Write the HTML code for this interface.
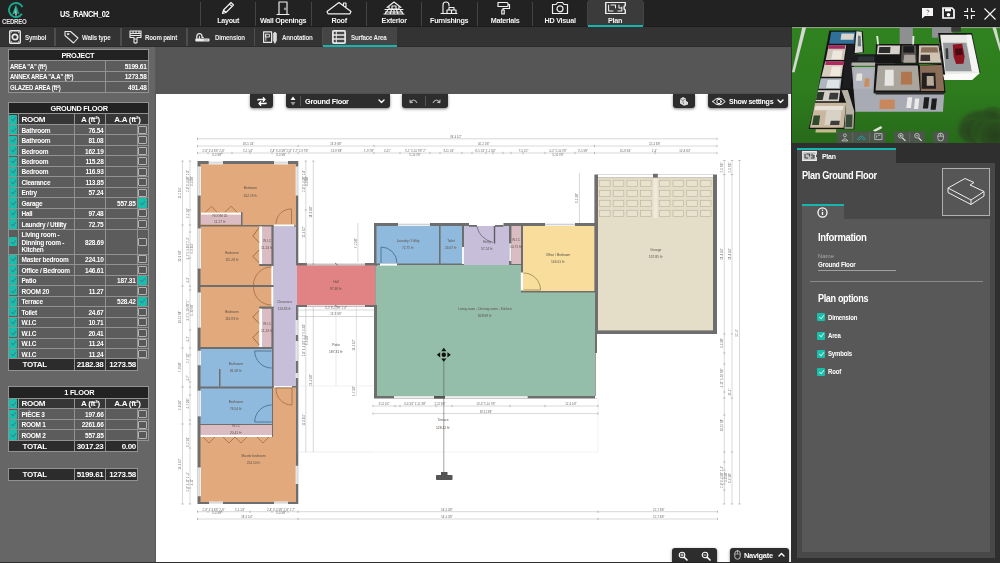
<!DOCTYPE html><html><head><meta charset="utf-8"><title>Cedreo</title><style>*{box-sizing:border-box;margin:0;padding:0}
html,body{width:1000px;height:563px;overflow:hidden;background:#333;font-family:"Liberation Sans",sans-serif;color:#fff}
.abs{position:absolute}
#topbar{position:absolute;left:0;top:0;width:1000px;height:27px;background:#222;border-bottom:1px solid #1c1c1c}
#toolbar{position:absolute;left:0;top:27px;width:1000px;height:20px;background:#333;border-bottom:1.2px solid #2b2b2b}
.tab{position:absolute;top:0;height:27px;text-align:center;font-weight:bold;font-size:8px;letter-spacing:-0.3px;color:#f4f4f4}
.tab span{position:absolute;left:-10px;right:-10px;top:16.3px;line-height:10px;white-space:nowrap;transform:scaleX(.9);letter-spacing:-0.3px}
.tab svg{position:absolute;left:50%;top:2px;margin-left:-8px}
.tsep{position:absolute;top:2px;width:1px;height:24px;background:#444}
.tool{position:absolute;top:0.6px;transform:scaleX(.95);transform-origin:0 50%;height:20px;font-weight:bold;font-size:6.5px;letter-spacing:-0.2px;color:#eee;line-height:20px;white-space:nowrap}
.tool2sep{position:absolute;top:1px;width:1.5px;height:18px;background:#4e4e4e}
#left{position:absolute;left:0;top:47px;width:156px;height:514.5px;background:#666;border-right:1px solid #585858}
#leftbot{position:absolute;left:0;top:561.5px;width:156px;height:2px;background:#2e2e2e}
table.t{position:absolute;border-collapse:collapse;border:1px solid #bdbdbd;font-weight:bold;font-size:6.5px;letter-spacing:-0.25px;color:#fff;table-layout:fixed}
table.t td{border:1px solid #929292;height:10.47px;line-height:9px;padding:0 1px 0 3px;white-space:nowrap;overflow:hidden;background:#5c5c5c}
table.t td.h{height:11.8px;background:#222;text-align:center;font-size:8px;letter-spacing:-0.3px}
table.t td.ch{height:10.6px;background:#363636;font-size:8px;letter-spacing:-0.3px}
table.t td.r{text-align:right;padding-left:0;padding-right:1px}
table.t td.c{text-align:center}
table.t td.tt{height:11.6px;background:#2c2c2c;font-size:8px;letter-spacing:-0.3px}
table.t td.nb{border:none;background:transparent}
.cb{display:inline-block;width:8.6px;height:9.2px;background:#18c0ac;border-radius:1px;vertical-align:middle;position:relative}
.cb:after{content:"";position:absolute;left:3px;top:1.4px;width:2.2px;height:4.4px;border:solid #3a7f9a;border-width:0 1px 1px 0;transform:rotate(40deg)}
.cbe{display:inline-block;width:8.6px;height:8px;background:#585858;border:1.2px solid #b4b4b4;border-radius:1px;vertical-align:middle}
#main{position:absolute;left:156px;top:47px;width:635px;height:516px;background:#565656}
#canvas{position:absolute;left:0;top:47px;width:635px;height:467.5px;background:#fff}
.btn{position:absolute;background:#2d2d2d;border-radius:0 0 3px 3px;box-shadow:0 1px 3px rgba(0,0,0,.5);color:#fff;font-weight:bold;font-size:8px;letter-spacing:-0.3px}
.btnb{border-radius:3px 3px 0 0}
#right{position:absolute;left:791px;top:27px;width:209px;height:536px;background:#2f2f2f}
.tab .ic{position:absolute;left:0;right:0;top:0.9px;height:14px;text-align:center;line-height:0}
.tab .ic svg{position:static;margin:0;display:inline-block}
.tab.act{background:#3b3b3b;border-bottom:2px solid #16b5ae}
table.t td.k{padding:0;text-align:center;line-height:0}
table.t tr.ml td{height:25px;white-space:normal;line-height:7.6px}
table.t .sx{display:inline-block;transform:scaleX(.92);transform-origin:0 50%}
.btn .lbl{white-space:nowrap}
table.t.pj td{height:10.55px;padding-left:1px}table.t.pj td.h{height:11px}
table.t td.tl{padding-left:14px}
#toolbar svg{display:block}
.cbs:after{left:2.9px;top:0.8px;width:2.2px;height:4.4px;border-color:#bfeee6}
#app{position:absolute;left:0;top:0;width:1000px;height:563px;overflow:hidden;will-change:transform}
table.t .hx{display:inline-block;transform:scaleX(.92)}
table.t td{padding-top:1.3px;line-height:7.6px}
table.t td.h,table.t td.ch,table.t td.tt{padding-top:0;line-height:9px}table.t td.k{padding-top:0}
table.t td.h{padding-top:.6px}
</style></head><body><div id="app">
<div id="topbar">
<svg class="abs" style="left:6px;top:1px" width="24" height="18" viewBox="0 0 24 18"><circle cx="10" cy="9" r="7" fill="none" stroke="#1aa88c" stroke-width="1.9" stroke-dasharray="37 7" transform="rotate(32 10 9)"/><path d="M10 3.6 L6.2 13.4 L10 12 Z" fill="#25b89a"/><path d="M10 3.6 L13.8 13.4 L10 12 Z" fill="#149078"/><path d="M10 6.5 L9.3 14.5 L10.7 14.5 Z" fill="#e8f4f0"/></svg>
<div class="abs" style="left:2.3px;top:18.3px;font-size:7.6px;font-weight:bold;letter-spacing:-0.3px;color:#e4e4e4;line-height:8px;transform:scaleX(.8);transform-origin:0 50%">CEDREO</div>
<div class="abs" id="pname" style="left:60px;top:9px;font-size:8.5px;font-weight:bold;letter-spacing:-0.45px;color:#fff;line-height:10px;transform:scaleX(.87);transform-origin:0 50%">US_RANCH_02</div>
<div class="tsep" style="left:200.0px"></div>
<div class="tab" style="left:201.0px;width:54.3px"><div class="ic"><svg width="16" height="14" viewBox="0 0 16 14" stroke="#f0f0f0" stroke-width="1.15" fill="none" stroke-linecap="round" stroke-linejoin="round"><path d="M2.5 12.5 L3.5 9 L11 1.5 L13.5 4 L6 11.5 Z M9.5 3 L12 5.5 M3.5 9 L6 11.5"/></svg></div><span>Layout</span></div>
<div class="tsep" style="left:255.3px"></div>
<div class="tab" style="left:256.3px;width:54.3px"><div class="ic"><svg width="16" height="14" viewBox="0 0 16 14" stroke="#f0f0f0" stroke-width="1.15" fill="none" stroke-linecap="round" stroke-linejoin="round"><path d="M4 13.5 L4 1 L12 1 L12 13.5 M2 13.5 L14 13.5 M10 7 L10 8.5"/></svg></div><span>Wall Openings</span></div>
<div class="tsep" style="left:310.7px"></div>
<div class="tab" style="left:311.7px;width:54.3px"><div class="ic"><svg width="28" height="14" viewBox="0 0 28 14" stroke="#f0f0f0" stroke-width="1.15" fill="none" stroke-linecap="round" stroke-linejoin="round"><path d="M2 10.5 L14 1.5 L26 10.5 M18.5 5 L18.5 2 L21 2 L21 7 M3 12.8 L25 12.8 M2 10.5 L3 12.8 M26 10.5 L25 12.8"/></svg></div><span>Roof</span></div>
<div class="tsep" style="left:366.0px"></div>
<div class="tab" style="left:367.0px;width:54.3px"><div class="ic"><svg width="22" height="14" viewBox="0 0 22 14" stroke="#f0f0f0" stroke-width="1.15" fill="none" stroke-linecap="round" stroke-linejoin="round"><path d="M4 6.5 L11 1 L18 6.5 M6 5 L6 8 L16 8 L16 5 M9 8 L9 5 L13 5 L13 8 M2 8.5 L20 8.5 M5 8.5 L2 13 M8.5 8.5 L7 13 M11 8.5 L11 13 M13.5 8.5 L15 13 M17 8.5 L20 13 M1 13 L21 13 M2.5 11 L19.5 11"/></svg></div><span>Exterior</span></div>
<div class="tsep" style="left:421.3px"></div>
<div class="tab" style="left:422.3px;width:54.3px"><div class="ic"><svg width="20" height="14" viewBox="0 0 20 14" stroke="#f0f0f0" stroke-width="1.15" fill="none" stroke-linecap="round" stroke-linejoin="round"><path d="M4 12.5 L4 4 Q4 1 7 1 Q10 1 10 4 L10 5 M2 12.5 L18 12.5 M8 12.5 L8 9 L17 9 L17 12.5 M10 9 L10 6.5 L15 6.5 L15 9 M12.5 9 L12.5 12.5"/></svg></div><span>Furnishings</span></div>
<div class="tsep" style="left:476.6px"></div>
<div class="tab" style="left:477.6px;width:54.3px"><div class="ic"><svg width="16" height="14" viewBox="1.5 0 16 14" stroke="#f0f0f0" stroke-width="1.15" fill="none" stroke-linecap="round" stroke-linejoin="round"><path d="M2.5 1.5 L11.5 1.5 Q12.5 1.5 12.5 2.5 L12.5 4.5 Q12.5 5.5 11.5 5.5 L2.5 5.5 Z M12.5 3.5 L14 3.5 L14 7.5 L7.5 7.5 L7.5 9 M6.3 9 L8.7 9 L8.7 13 L6.3 13 Z" stroke-width="1.2"/></svg></div><span>Materials</span></div>
<div class="tsep" style="left:532.0px"></div>
<div class="tab" style="left:533.0px;width:54.3px"><div class="ic"><svg width="18" height="14" viewBox="0 0 18 14" stroke="#f0f0f0" stroke-width="1.15" fill="none" stroke-linecap="round" stroke-linejoin="round"><path d="M1.5 3.5 L5 3.5 L6.5 1.5 L11.5 1.5 L13 3.5 L16.5 3.5 L16.5 12.5 L1.5 12.5 Z" stroke-width="1.2"/><circle cx="9" cy="7.8" r="3" stroke-width="1.2"/></svg></div><span>HD Visual</span></div>
<div class="tsep" style="left:587.3px"></div>
<div class="tab act" style="left:588.3px;width:54.3px"><div class="ic"><svg width="23" height="14" viewBox="0 0 20 14" preserveAspectRatio="none" stroke="#f0f0f0" stroke-width="1.15" fill="none" stroke-linecap="round" stroke-linejoin="round"><path d="M1.5 1.5 L18.5 1.5 L18.5 4.5 L17.5 5.5 L17.5 8 L18.5 9 L18.5 12.5 L1.5 12.5 Z" stroke-width="1.2"/><path d="M4 4 L4 10 L8 10 M6 4 L10 4 L10 7 M12 10 L15.5 10 L15.5 6 M13 4 L13 7 L15.5 7" stroke-width="0.9"/></svg></div><span>Plan</span></div>
<div class="tsep" style="left:642.6px"></div>
<svg class="abs" style="left:921px;top:7px" width="13" height="12" viewBox="0 0 13 12"><path d="M1 1 H12 V9 H4 L1 11.5 Z" fill="#f6f6f6"/><path d="M5.5 3.2 Q7.8 2.6 7.8 4.2 Q7.8 5 6.6 5.6 M6.5 7.2 v0.4" stroke="#667" stroke-width="0.9" fill="none"/></svg>
<svg class="abs" style="left:942px;top:7px" width="13" height="12" viewBox="0 0 13 12"><path d="M1 1 H10 L12 3 V11 H1 Z" fill="none" stroke="#fff" stroke-width="1.7"/><rect x="3" y="1.5" width="6" height="2.8" fill="#fff"/><circle cx="6.5" cy="7.7" r="1.8" fill="#fff"/></svg>
<svg class="abs" style="left:963px;top:7px" width="13" height="13" viewBox="0 0 13 13" fill="none" stroke="#f2f2f2" stroke-width="1.2"><path d="M1 4.5 H4.5 V1 M8.5 1 V4.5 H12 M12 8.5 H8.5 V12 M4.5 12 V8.5 H1"/></svg>
<svg class="abs" style="left:984px;top:8px" width="12" height="12" viewBox="0 0 12 12" fill="none" stroke="#f2f2f2" stroke-width="1.2"><path d="M0.5 0.5 L11.5 11.5 M11.5 0.5 L0.5 11.5"/></svg>
</div>
<div id="toolbar">
<div class="tool2sep" style="left:54px"></div>
<div class="tool2sep" style="left:120.3px"></div>
<div class="tool2sep" style="left:186.3px"></div>
<div class="tool2sep" style="left:253.7px"></div>
<div class="tool2sep" style="left:321.5px"></div>
<div class="abs" style="left:322.5px;top:0;width:74.5px;height:20px;background:#454545;border-bottom:2px solid #16b5ae"></div>
<div class="abs" style="left:9px;top:3px"><svg width="12" height="14" viewBox="0 0 12 14" stroke="#e8e8e8" stroke-width="1" fill="none" stroke-linecap="round" stroke-linejoin="round"><rect x="0.7" y="0.7" width="10.6" height="12.6" rx="1" stroke-width="1.4"/><circle cx="6" cy="7" r="2.7" stroke-width="1.7"/><path d="M2.2 2.2 h0.5 M9.3 2.2 h0.5 M2.2 11.8 h0.5 M9.3 11.8 h0.5"/></svg></div>
<div class="tool" style="left:25px">Symbol</div>
<div class="abs" style="left:64px;top:3px"><svg width="15" height="14" viewBox="0 0 15 14" stroke="#e8e8e8" stroke-width="1" fill="none" stroke-linecap="round" stroke-linejoin="round"><path d="M1 1.5 L6.5 1.5 L14 8 L9.5 13 L1 5.5 Z" stroke-width="1.1"/><circle cx="4" cy="4" r="0.8"/></svg></div>
<div class="tool" style="left:82px">Walls type</div>
<div class="abs" style="left:129px;top:3px"><svg width="13" height="14" viewBox="0 0 13 14" stroke="#e8e8e8" stroke-width="1" fill="none" stroke-linecap="round" stroke-linejoin="round"><path d="M1 1 H12 V5.5 H1 Z M1 3.5 H12 M4 1 V3 M7 1 V2.5 M10 1 V3 M1 5.5 V7.5 H5 V9 M8 9 V7.5 H12 V5.5 M5 9 H8 V12.5 Q6.5 13.8 5 12.5 Z" stroke-width="1.1"/></svg></div>
<div class="tool" style="left:145px">Room paint</div>
<div class="abs" style="left:195.3px;top:5.8px"><svg width="15" height="9" viewBox="0 0 15 9" stroke="#e8e8e8" stroke-width="1" fill="none" stroke-linecap="round" stroke-linejoin="round"><path d="M1.8 5.6 V3.4 Q1.8 0.7 4.4 0.7 Q7 0.7 7 3.4 V4.4 H8.2" stroke-width="1.2"/><path d="M4.4 3.3 V5.6" stroke-width="1"/><rect x="0.3" y="5.4" width="14.2" height="3" rx="0.7" fill="#ececec" stroke="none"/><path d="M9 7 H13" stroke="#666" stroke-width="0.6"/></svg></div>
<div class="tool" style="left:215px">Dimension</div>
<div class="abs" style="left:263px;top:4px"><svg width="14" height="13" viewBox="0 0 14 13" stroke="#e8e8e8" stroke-width="1" fill="none" stroke-linecap="round" stroke-linejoin="round"><rect x="0.6" y="0.8" width="8" height="10.6" stroke-width="1.2"/><path d="M2.8 3.2 H6.4 V6 H2.8 Z M2.8 3.2 V9.4" stroke-width="0.9"/><path d="M10.4 2.6 Q11.9 -0.4 13.4 2.6 V9.6 L11.9 12.4 L10.4 9.6 Z" stroke-width="0.7" fill="#dcdcdc"/></svg></div>
<div class="tool" style="left:281.5px">Annotation</div>
<div class="abs" style="left:331.5px;top:3px"><svg width="14" height="14" viewBox="0 0 14 14" stroke="#e8e8e8" stroke-width="1" fill="none" stroke-linecap="round" stroke-linejoin="round"><rect x="0.9" y="0.9" width="12.2" height="12.2" rx="0.8" stroke-width="1.7"/><path d="M0.9 5 H13.1 M0.9 9 H13.1" stroke-width="1.3"/><path d="M4.3 0.9 V13.1" stroke-width="1"/></svg></div>
<div class="tool" style="left:350.5px">Surface Area</div>
</div>
<div id="left">
<table class="t pj" style="left:7.5px;top:2px;width:140.5px"><colgroup><col style="width:97px"><col style="width:43px"></colgroup>
<tr><td class="h" colspan="2"><span class="hx">PROJECT</span></td></tr>
<tr><td><span class="sx">AREA "A" (ft²)</span></td><td class="r">5199.61</td></tr>
<tr><td><span class="sx">ANNEX AREA "A.A" (ft²)</span></td><td class="r">1273.58</td></tr>
<tr><td><span class="sx">GLAZED AREA (ft²)</span></td><td class="r">491.48</td></tr>
</table>
<table class="t" style="left:7.5px;top:54.6px;width:140.5px"><colgroup><col style="width:10px"><col style="width:56px"><col style="width:31px"><col style="width:32px"><col style="width:11px"></colgroup>
<tr><td class="h" colspan="5"><span class="hx">GROUND FLOOR</span></td></tr>
<tr><td class="ch k"><i class="cb"></i></td><td class="ch">ROOM</td><td class="ch c">A (ft²)</td><td class="ch c" colspan="2">A.A (ft²)</td></tr>
<tr><td class="k"><i class="cb"></i></td><td>Bathroom</td><td class="r">76.54</td><td class="r"></td><td class="k"><i class="cbe"></i></td></tr>
<tr><td class="k"><i class="cb"></i></td><td>Bathroom</td><td class="r">81.08</td><td class="r"></td><td class="k"><i class="cbe"></i></td></tr>
<tr><td class="k"><i class="cb"></i></td><td>Bedroom</td><td class="r">162.19</td><td class="r"></td><td class="k"><i class="cbe"></i></td></tr>
<tr><td class="k"><i class="cb"></i></td><td>Bedroom</td><td class="r">115.28</td><td class="r"></td><td class="k"><i class="cbe"></i></td></tr>
<tr><td class="k"><i class="cb"></i></td><td>Bedroom</td><td class="r">116.93</td><td class="r"></td><td class="k"><i class="cbe"></i></td></tr>
<tr><td class="k"><i class="cb"></i></td><td>Clearance</td><td class="r">113.85</td><td class="r"></td><td class="k"><i class="cbe"></i></td></tr>
<tr><td class="k"><i class="cb"></i></td><td>Entry</td><td class="r">57.24</td><td class="r"></td><td class="k"><i class="cbe"></i></td></tr>
<tr><td class="k"><i class="cb"></i></td><td>Garage</td><td class="r"></td><td class="r">557.85</td><td class="k"><i class="cb"></i></td></tr>
<tr><td class="k"><i class="cb"></i></td><td>Hall</td><td class="r">97.48</td><td class="r"></td><td class="k"><i class="cbe"></i></td></tr>
<tr><td class="k"><i class="cb"></i></td><td>Laundry / Utility</td><td class="r">72.75</td><td class="r"></td><td class="k"><i class="cbe"></i></td></tr>
<tr class="ml"><td class="k"><i class="cb"></i></td><td>Living room -<br>Dinning room -<br>Kitchen</td><td class="r">828.69</td><td class="r"></td><td class="k"><i class="cbe"></i></td></tr>
<tr><td class="k"><i class="cb"></i></td><td>Master bedroom</td><td class="r">224.10</td><td class="r"></td><td class="k"><i class="cbe"></i></td></tr>
<tr><td class="k"><i class="cb"></i></td><td>Office / Bedroom</td><td class="r">146.61</td><td class="r"></td><td class="k"><i class="cbe"></i></td></tr>
<tr><td class="k"><i class="cb"></i></td><td>Patio</td><td class="r"></td><td class="r">187.31</td><td class="k"><i class="cb"></i></td></tr>
<tr><td class="k"><i class="cb"></i></td><td>ROOM 20</td><td class="r">11.27</td><td class="r"></td><td class="k"><i class="cbe"></i></td></tr>
<tr><td class="k"><i class="cb"></i></td><td>Terrace</td><td class="r"></td><td class="r">528.42</td><td class="k"><i class="cb"></i></td></tr>
<tr><td class="k"><i class="cb"></i></td><td>Toilet</td><td class="r">24.67</td><td class="r"></td><td class="k"><i class="cbe"></i></td></tr>
<tr><td class="k"><i class="cb"></i></td><td>W.I.C</td><td class="r">10.71</td><td class="r"></td><td class="k"><i class="cbe"></i></td></tr>
<tr><td class="k"><i class="cb"></i></td><td>W.I.C</td><td class="r">20.41</td><td class="r"></td><td class="k"><i class="cbe"></i></td></tr>
<tr><td class="k"><i class="cb"></i></td><td>W.I.C</td><td class="r">11.24</td><td class="r"></td><td class="k"><i class="cbe"></i></td></tr>
<tr><td class="k"><i class="cb"></i></td><td>W.I.C</td><td class="r">11.24</td><td class="r"></td><td class="k"><i class="cbe"></i></td></tr>
</table>
<table class="t" style="left:7.5px;top:311.4px;width:130px"><colgroup><col style="width:10px"><col style="width:56px"><col style="width:31px"><col style="width:32.5px"></colgroup><tr><td class="tt tl" colspan="2">TOTAL</td><td class="tt r">2182.38</td><td class="tt r">1273.58</td></tr></table>
<table class="t" style="left:7.5px;top:339px;width:140.5px"><colgroup><col style="width:10px"><col style="width:56px"><col style="width:31px"><col style="width:32px"><col style="width:11px"></colgroup>
<tr><td class="h" colspan="5"><span class="hx">1 FLOOR</span></td></tr>
<tr><td class="ch k"><i class="cb"></i></td><td class="ch">ROOM</td><td class="ch c">A (ft²)</td><td class="ch c" colspan="2">A.A (ft²)</td></tr>
<tr><td class="k"><i class="cb"></i></td><td>PIÈCE 3</td><td class="r">197.66</td><td class="r"></td><td class="k"><i class="cbe"></i></td></tr>
<tr><td class="k"><i class="cb"></i></td><td>ROOM 1</td><td class="r">2261.66</td><td class="r"></td><td class="k"><i class="cbe"></i></td></tr>
<tr><td class="k"><i class="cb"></i></td><td>ROOM 2</td><td class="r">557.85</td><td class="r"></td><td class="k"><i class="cbe"></i></td></tr>
</table>
<table class="t" style="left:7.5px;top:392.8px;width:130px"><colgroup><col style="width:10px"><col style="width:56px"><col style="width:31px"><col style="width:32.5px"></colgroup><tr><td class="tt tl" colspan="2">TOTAL</td><td class="tt r">3017.23</td><td class="tt r">0.00</td></tr></table>
<table class="t" style="left:7.5px;top:421px;width:130px"><colgroup><col style="width:10px"><col style="width:56px"><col style="width:31px"><col style="width:32.5px"></colgroup><tr><td class="tt tl" colspan="2">TOTAL</td><td class="tt r">5199.61</td><td class="tt r">1273.58</td></tr></table>
</div><div id="leftbot"></div>
<div id="main"><div id="canvas"></div><div class="abs" style="left:0;top:514.5px;width:635px;height:2px;background:#303030"></div></div>
<svg class="abs" style="left:0;top:0;font-family:'Liberation Sans',sans-serif" width="1000" height="563" viewBox="0 0 1000 563"><rect x="197.5" y="161.0" width="100.8" height="343.0" fill="#6e6e6e" />
<rect x="297.0" y="263.0" width="80.0" height="44.0" fill="#6e6e6e" />
<rect x="374.0" y="223.0" width="223.0" height="175.5" fill="#6e6e6e" />
<rect x="594.4" y="174.5" width="122.6" height="159.5" fill="#6e6e6e" />
<rect x="200.5" y="164.0" width="95.5" height="61.0" fill="#e2a97d" />
<rect x="273.0" y="164.0" width="23.0" height="61.5" fill="#e2a97d" />
<rect x="201.0" y="214.4" width="40.0" height="9.6" fill="#dcbcc3" />
<rect x="201.0" y="212.6" width="40.0" height="2.0" fill="#fff" />
<rect x="241.0" y="212.0" width="1.5" height="13.0" fill="#6e6e6e" />
<rect x="200.5" y="226.5" width="61.5" height="58.5" fill="#e2a97d" />
<rect x="262.0" y="265.0" width="11.0" height="20.0" fill="#e2a97d" />
<rect x="262.4" y="226.5" width="9.0" height="37.5" fill="#dcbcc3" />
<rect x="259.2" y="226.5" width="3.2" height="37.5" fill="#fff" />
<rect x="259.2" y="264.0" width="14.2" height="2.0" fill="#6e6e6e" />
<rect x="271.4" y="266.0" width="2.2" height="19.0" fill="#fff" />
<rect x="273.6" y="226.5" width="22.4" height="159.5" fill="#c7bfd9" />
<rect x="274.0" y="224.5" width="20.0" height="2.0" fill="#fff" />
<rect x="200.5" y="287.0" width="61.5" height="60.0" fill="#e2a97d" />
<rect x="262.0" y="287.0" width="11.0" height="21.0" fill="#e2a97d" />
<rect x="262.4" y="308.5" width="9.0" height="38.5" fill="#dcbcc3" />
<rect x="259.2" y="308.5" width="3.2" height="38.5" fill="#fff" />
<rect x="259.2" y="306.5" width="14.2" height="2.0" fill="#6e6e6e" />
<rect x="271.4" y="287.0" width="2.2" height="19.5" fill="#fff" />
<rect x="200.5" y="349.0" width="71.5" height="37.5" fill="#90badd" />
<rect x="200.5" y="388.5" width="71.5" height="35.5" fill="#90badd" />
<rect x="200.5" y="425.0" width="71.5" height="10.0" fill="#dcbcc3" />
<rect x="200.5" y="435.0" width="71.5" height="2.0" fill="#fff" />
<rect x="200.5" y="437.0" width="95.5" height="65.0" fill="#e2a97d" />
<rect x="273.0" y="387.5" width="23.0" height="49.5" fill="#e2a97d" />
<rect x="274.0" y="386.0" width="18.0" height="1.5" fill="#fff" />
<rect x="296.0" y="265.4" width="79.5" height="39.6" fill="#e18384" />
<rect x="296.0" y="265.4" width="1.0" height="39.6" fill="#c7bfd9" />
<rect x="307.0" y="263.0" width="58.0" height="2.4" fill="#fbfbfb" />
<path d="M307.0 264.2 L365.0 264.2" stroke="#8a8a8a" stroke-width="0.7" fill="none"/>
<path d="M335.0 263.0 L338.0 265.4" stroke="#666" stroke-width="0.8" fill="none"/>
<rect x="307.0" y="305.0" width="58.0" height="2.4" fill="#fbfbfb" />
<path d="M307.0 306.2 L365.0 306.2" stroke="#8a8a8a" stroke-width="0.7" fill="none"/>
<path d="M335.0 305.0 L338.0 307.4" stroke="#666" stroke-width="0.8" fill="none"/>
<rect x="376.5" y="226.0" width="62.5" height="37.5" fill="#90badd" />
<rect x="440.6" y="226.0" width="21.4" height="37.5" fill="#90badd" />
<rect x="464.0" y="226.0" width="45.0" height="39.0" fill="#c7bfd9" />
<rect x="511.4" y="226.0" width="9.6" height="38.0" fill="#dcbcc3" />
<rect x="523.0" y="226.0" width="71.4" height="65.0" fill="#f8dd9d" />
<path d="M377 265 L521 265 L521 292.5 L595 292.5 L595 396 L377 396 Z" fill="#94bea9"/>
<rect x="375.5" y="266.0" width="1.5" height="39.0" fill="#94bea9" />
<rect x="598.0" y="178.0" width="115.0" height="152.4" fill="#e4ddc8" />
<rect x="599.5" y="180.3" width="10.6" height="6.2" fill="#e8e2ce" stroke="#bfb8a0" stroke-width="0.7"/>
<rect x="613.2" y="180.3" width="10.6" height="6.2" fill="#e8e2ce" stroke="#bfb8a0" stroke-width="0.7"/>
<rect x="626.9" y="180.3" width="10.6" height="6.2" fill="#e8e2ce" stroke="#bfb8a0" stroke-width="0.7"/>
<rect x="640.6" y="180.3" width="10.6" height="6.2" fill="#e8e2ce" stroke="#bfb8a0" stroke-width="0.7"/>
<rect x="659.3" y="180.3" width="10.6" height="6.2" fill="#e8e2ce" stroke="#bfb8a0" stroke-width="0.7"/>
<rect x="673.0" y="180.3" width="10.6" height="6.2" fill="#e8e2ce" stroke="#bfb8a0" stroke-width="0.7"/>
<rect x="686.7" y="180.3" width="10.6" height="6.2" fill="#e8e2ce" stroke="#bfb8a0" stroke-width="0.7"/>
<rect x="700.4" y="180.3" width="10.6" height="6.2" fill="#e8e2ce" stroke="#bfb8a0" stroke-width="0.7"/>
<rect x="599.5" y="190.3" width="10.6" height="6.2" fill="#e8e2ce" stroke="#bfb8a0" stroke-width="0.7"/>
<rect x="613.2" y="190.3" width="10.6" height="6.2" fill="#e8e2ce" stroke="#bfb8a0" stroke-width="0.7"/>
<rect x="626.9" y="190.3" width="10.6" height="6.2" fill="#e8e2ce" stroke="#bfb8a0" stroke-width="0.7"/>
<rect x="640.6" y="190.3" width="10.6" height="6.2" fill="#e8e2ce" stroke="#bfb8a0" stroke-width="0.7"/>
<rect x="659.3" y="190.3" width="10.6" height="6.2" fill="#e8e2ce" stroke="#bfb8a0" stroke-width="0.7"/>
<rect x="673.0" y="190.3" width="10.6" height="6.2" fill="#e8e2ce" stroke="#bfb8a0" stroke-width="0.7"/>
<rect x="686.7" y="190.3" width="10.6" height="6.2" fill="#e8e2ce" stroke="#bfb8a0" stroke-width="0.7"/>
<rect x="700.4" y="190.3" width="10.6" height="6.2" fill="#e8e2ce" stroke="#bfb8a0" stroke-width="0.7"/>
<rect x="599.5" y="200.3" width="10.6" height="6.2" fill="#e8e2ce" stroke="#bfb8a0" stroke-width="0.7"/>
<rect x="613.2" y="200.3" width="10.6" height="6.2" fill="#e8e2ce" stroke="#bfb8a0" stroke-width="0.7"/>
<rect x="626.9" y="200.3" width="10.6" height="6.2" fill="#e8e2ce" stroke="#bfb8a0" stroke-width="0.7"/>
<rect x="640.6" y="200.3" width="10.6" height="6.2" fill="#e8e2ce" stroke="#bfb8a0" stroke-width="0.7"/>
<rect x="659.3" y="200.3" width="10.6" height="6.2" fill="#e8e2ce" stroke="#bfb8a0" stroke-width="0.7"/>
<rect x="673.0" y="200.3" width="10.6" height="6.2" fill="#e8e2ce" stroke="#bfb8a0" stroke-width="0.7"/>
<rect x="686.7" y="200.3" width="10.6" height="6.2" fill="#e8e2ce" stroke="#bfb8a0" stroke-width="0.7"/>
<rect x="700.4" y="200.3" width="10.6" height="6.2" fill="#e8e2ce" stroke="#bfb8a0" stroke-width="0.7"/>
<rect x="599.5" y="210.3" width="10.6" height="6.2" fill="#e8e2ce" stroke="#bfb8a0" stroke-width="0.7"/>
<rect x="613.2" y="210.3" width="10.6" height="6.2" fill="#e8e2ce" stroke="#bfb8a0" stroke-width="0.7"/>
<rect x="626.9" y="210.3" width="10.6" height="6.2" fill="#e8e2ce" stroke="#bfb8a0" stroke-width="0.7"/>
<rect x="640.6" y="210.3" width="10.6" height="6.2" fill="#e8e2ce" stroke="#bfb8a0" stroke-width="0.7"/>
<rect x="659.3" y="210.3" width="10.6" height="6.2" fill="#e8e2ce" stroke="#bfb8a0" stroke-width="0.7"/>
<rect x="673.0" y="210.3" width="10.6" height="6.2" fill="#e8e2ce" stroke="#bfb8a0" stroke-width="0.7"/>
<rect x="686.7" y="210.3" width="10.6" height="6.2" fill="#e8e2ce" stroke="#bfb8a0" stroke-width="0.7"/>
<rect x="700.4" y="210.3" width="10.6" height="6.2" fill="#e8e2ce" stroke="#bfb8a0" stroke-width="0.7"/>
<rect x="653.5" y="178.0" width="4.0" height="40.0" fill="#efeadb" />
<rect x="598.0" y="174.5" width="115.0" height="3.5" fill="#fff" />
<rect x="598.0" y="177.0" width="115.0" height="1.2" fill="#cfcabb" />
<rect x="653.0" y="173.8" width="4.8" height="3.8" fill="#6e6e6e" />
<rect x="208.7" y="161.0" width="14.3" height="3.5" fill="#eef0f1" />
<path d="M208.7 162.8 L223.0 162.8" stroke="#b9bdc0" stroke-width="0.6" fill="none"/>
<rect x="274.0" y="161.0" width="14.0" height="3.5" fill="#eef0f1" />
<path d="M274.0 162.8 L288.0 162.8" stroke="#b9bdc0" stroke-width="0.6" fill="none"/>
<rect x="197.5" y="166.5" width="3.5" height="29.0" fill="#eef0f1" />
<path d="M199.2 166.5 L199.2 195.5" stroke="#b9bdc0" stroke-width="0.6" fill="none"/>
<rect x="197.5" y="228.5" width="3.5" height="40.0" fill="#eef0f1" />
<path d="M199.2 228.5 L199.2 268.5" stroke="#b9bdc0" stroke-width="0.6" fill="none"/>
<rect x="197.5" y="292.5" width="3.5" height="35.1" fill="#eef0f1" />
<path d="M199.2 292.5 L199.2 327.6" stroke="#b9bdc0" stroke-width="0.6" fill="none"/>
<rect x="197.5" y="350.8" width="3.5" height="14.4" fill="#eef0f1" />
<path d="M199.2 350.8 L199.2 365.2" stroke="#b9bdc0" stroke-width="0.6" fill="none"/>
<rect x="197.5" y="390.7" width="3.5" height="25.6" fill="#eef0f1" />
<path d="M199.2 390.7 L199.2 416.3" stroke="#b9bdc0" stroke-width="0.6" fill="none"/>
<rect x="197.5" y="467.5" width="3.5" height="28.7" fill="#eef0f1" />
<path d="M199.2 467.5 L199.2 496.2" stroke="#b9bdc0" stroke-width="0.6" fill="none"/>
<rect x="295.6" y="166.5" width="3.2" height="29.0" fill="#eef0f1" />
<path d="M297.2 166.5 L297.2 195.5" stroke="#b9bdc0" stroke-width="0.6" fill="none"/>
<rect x="295.6" y="320.0" width="3.2" height="15.0" fill="#eef0f1" />
<path d="M297.2 320.0 L297.2 335.0" stroke="#b9bdc0" stroke-width="0.6" fill="none"/>
<rect x="295.6" y="341.0" width="3.2" height="20.0" fill="#eef0f1" />
<path d="M297.2 341.0 L297.2 361.0" stroke="#b9bdc0" stroke-width="0.6" fill="none"/>
<rect x="295.6" y="373.0" width="3.2" height="5.0" fill="#eef0f1" />
<path d="M297.2 373.0 L297.2 378.0" stroke="#b9bdc0" stroke-width="0.6" fill="none"/>
<rect x="295.6" y="465.8" width="3.2" height="18.2" fill="#eef0f1" />
<path d="M297.2 465.8 L297.2 484.0" stroke="#b9bdc0" stroke-width="0.6" fill="none"/>
<rect x="209.0" y="501.5" width="14.0" height="2.5" fill="#eef0f1" />
<path d="M209.0 502.8 L223.0 502.8" stroke="#b9bdc0" stroke-width="0.6" fill="none"/>
<rect x="274.0" y="501.5" width="14.0" height="2.5" fill="#eef0f1" />
<path d="M274.0 502.8 L288.0 502.8" stroke="#b9bdc0" stroke-width="0.6" fill="none"/>
<rect x="398.0" y="223.0" width="32.0" height="3.0" fill="#eef0f1" />
<path d="M398.0 224.5 L430.0 224.5" stroke="#b9bdc0" stroke-width="0.6" fill="none"/>
<rect x="545.0" y="223.0" width="30.0" height="3.0" fill="#eef0f1" />
<path d="M545.0 224.5 L575.0 224.5" stroke="#b9bdc0" stroke-width="0.6" fill="none"/>
<rect x="469.0" y="223.0" width="34.5" height="3.0" fill="#fff" />
<path d="M291.5 224 L291.5 209 A15 15 0 0 0 276 224" stroke="#a0714a" stroke-width="0.85" fill="none"/>
<path d="M271.5 267 A18 18 0 0 0 253.5 285" stroke="#a0714a" stroke-width="0.85" fill="none"/>
<path d="M253.5 287 A18 18 0 0 0 271.5 305" stroke="#a0714a" stroke-width="0.85" fill="none"/>
<path d="M271.7 351 L254.7 351 A17 17 0 0 0 271.7 368" stroke="#4a6a8a" stroke-width="0.85" fill="none"/>
<path d="M271.7 422 L254.7 422 A17 17 0 0 1 271.7 405" stroke="#4a6a8a" stroke-width="0.85" fill="none"/>
<path d="M276 388 L292 388 L292 405 A16 16 0 0 1 276 388" stroke="#a0714a" stroke-width="0.85" fill="none"/>
<rect x="380.0" y="263.5" width="17.0" height="2.1" fill="#fff" />
<path d="M381 263 L381 247 A16 16 0 0 1 397 263" stroke="#4a6a8a" stroke-width="0.85" fill="none"/>
<rect x="462.0" y="247.0" width="2.0" height="17.0" fill="#f6f6f6" />
<rect x="509.2" y="243.5" width="2.2" height="17.5" fill="#f0f0f0" />
<rect x="520.8" y="272.5" width="2.2" height="18.0" fill="#fdfdfd" />
<path d="M523.5 273 A17 17 0 0 1 540.5 290 L523.5 290" stroke="#9a8a5a" stroke-width="0.85" fill="none"/>
<rect x="469.0" y="225.0" width="8.0" height="1.8" fill="#6e6e6e" />
<rect x="495.0" y="225.0" width="8.5" height="1.8" fill="#6e6e6e" />
<rect x="493.8" y="226.0" width="1.4" height="17.5" fill="#5c5c64" />
<path d="M477 226.8 Q479.5 238.5 493 242.5" stroke="#6a6a8a" stroke-width="0.85" fill="none"/>
<path d="M205.3 212.4 L211.5 206.2 L217 212.4 M225 212.4 L231 206.2 L237.3 212.4" stroke="#a0714a" stroke-width="0.85" fill="none"/>
<path d="M259.2 227.5 L252.8 236 L259.2 242.6 M259.2 250 L252.8 256.5 L259.2 262.8" stroke="#9a6636" stroke-width="0.85" fill="none"/>
<path d="M259.2 310.5 L252.8 317 L259.2 323.5 M259.2 331 L252.8 337.5 L259.2 345" stroke="#9a6636" stroke-width="0.85" fill="none"/>
<path d="M203 437 L209 443 L215 437 M223 437 L229 443 L235 437 L241 443 L247 437 M257 437 L263 443 L269 437" stroke="#a0714a" stroke-width="0.85" fill="none"/>
<rect x="219.0" y="369.0" width="1.5" height="17.5" fill="#6e6e6e" />
<rect x="595.0" y="353.0" width="2.0" height="45.5" fill="#fff" />
<rect x="595.0" y="353.0" width="0.8" height="43.0" fill="#888" />
<rect x="394.0" y="396.0" width="40.0" height="2.5" fill="#dcdcdc" />
<rect x="445.0" y="396.0" width="82.6" height="2.5" fill="#dcdcdc" />
<rect x="394.0" y="396.8" width="40.0" height="0.9" fill="#fafafa" />
<rect x="445.0" y="396.8" width="82.6" height="0.9" fill="#fafafa" />
<rect x="434.0" y="396.0" width="11.0" height="2.5" fill="#555" />
<path d="M298.3 307.0 L298.3 452.0" stroke="#d0d0d0" stroke-width="0.5" fill="none"/>
<path d="M298.3 452.0 L374.0 452.0" stroke="#d8d8d8" stroke-width="0.5" fill="none"/>
<path d="M598.0 398.5 L598.0 452.0" stroke="#e0e0e0" stroke-width="0.5" fill="none"/>
<path d="M374.0 452.0 L598.0 452.0" stroke="#e4e4e4" stroke-width="0.5" fill="none"/>
<path d="M197.0 138.8 L717.0 138.8" stroke="#9c9c9c" stroke-width="0.4" fill="none"/>
<path d="M197.0 146.0 L717.0 146.0" stroke="#9c9c9c" stroke-width="0.4" fill="none"/>
<path d="M197.0 153.0 L717.0 153.0" stroke="#9c9c9c" stroke-width="0.4" fill="none"/>
<path d="M182.5 161.0 L182.5 504.0" stroke="#9c9c9c" stroke-width="0.4" fill="none"/>
<path d="M190.0 161.0 L190.0 504.0" stroke="#9c9c9c" stroke-width="0.4" fill="none"/>
<path d="M305.8 161.0 L305.8 264.0" stroke="#9c9c9c" stroke-width="0.4" fill="none"/>
<path d="M313.3 161.0 L313.3 264.0" stroke="#9c9c9c" stroke-width="0.4" fill="none"/>
<path d="M197.0 511.7 L717.5 511.7" stroke="#9c9c9c" stroke-width="0.4" fill="none"/>
<path d="M197.0 519.0 L717.5 519.0" stroke="#9c9c9c" stroke-width="0.4" fill="none"/>
<path d="M724.3 160.5 L724.3 504.0" stroke="#9c9c9c" stroke-width="0.4" fill="none"/>
<path d="M732.0 160.5 L732.0 504.0" stroke="#9c9c9c" stroke-width="0.4" fill="none"/>
<path d="M739.5 160.5 L739.5 504.0" stroke="#9c9c9c" stroke-width="0.4" fill="none"/>
<path d="M373.0 406.0 L598.0 406.0" stroke="#9c9c9c" stroke-width="0.4" fill="none"/>
<path d="M373.0 413.6 L598.0 413.6" stroke="#9c9c9c" stroke-width="0.4" fill="none"/>
<path d="M579.4 173.0 L579.4 223.0" stroke="#9c9c9c" stroke-width="0.4" fill="none"/>
<path d="M357.9 223.0 L357.9 262.0" stroke="#9c9c9c" stroke-width="0.4" fill="none"/>
<path d="M298.0 310.0 L375.0 310.0" stroke="#9c9c9c" stroke-width="0.4" fill="none"/>
<path d="M298.0 316.5 L375.0 316.5" stroke="#9c9c9c" stroke-width="0.4" fill="none"/>
<path d="M305.8 307.0 L305.8 452.0" stroke="#9c9c9c" stroke-width="0.4" fill="none"/>
<path d="M313.3 307.0 L313.3 452.0" stroke="#9c9c9c" stroke-width="0.4" fill="none"/>
<path d="M336.0 307.0 L336.0 386.0" stroke="#c8c8c8" stroke-width="0.4" fill="none"/>
<path d="M356.4 307.0 L356.4 396.0" stroke="#b8b8b8" stroke-width="0.4" fill="none"/>
<path d="M298.0 386.0 L374.0 386.0" stroke="#d8d8d8" stroke-width="0.4" fill="none"/>
<path d="M197.5 137.6 L197.5 140.0" stroke="#888" stroke-width="0.5" fill="none"/>
<path d="M717.0 137.6 L717.0 140.0" stroke="#888" stroke-width="0.5" fill="none"/>
<path d="M197.5 144.8 L197.5 147.2" stroke="#888" stroke-width="0.5" fill="none"/>
<path d="M298.0 144.8 L298.0 147.2" stroke="#888" stroke-width="0.5" fill="none"/>
<path d="M374.0 144.8 L374.0 147.2" stroke="#888" stroke-width="0.5" fill="none"/>
<path d="M594.5 144.8 L594.5 147.2" stroke="#888" stroke-width="0.5" fill="none"/>
<path d="M717.0 144.8 L717.0 147.2" stroke="#888" stroke-width="0.5" fill="none"/>
<path d="M197.5 151.8 L197.5 154.2" stroke="#888" stroke-width="0.5" fill="none"/>
<path d="M208.0 151.8 L208.0 154.2" stroke="#888" stroke-width="0.5" fill="none"/>
<path d="M222.0 151.8 L222.0 154.2" stroke="#888" stroke-width="0.5" fill="none"/>
<path d="M232.0 151.8 L232.0 154.2" stroke="#888" stroke-width="0.5" fill="none"/>
<path d="M250.0 151.8 L250.0 154.2" stroke="#888" stroke-width="0.5" fill="none"/>
<path d="M272.0 151.8 L272.0 154.2" stroke="#888" stroke-width="0.5" fill="none"/>
<path d="M289.0 151.8 L289.0 154.2" stroke="#888" stroke-width="0.5" fill="none"/>
<path d="M298.0 151.8 L298.0 154.2" stroke="#888" stroke-width="0.5" fill="none"/>
<path d="M374.0 151.8 L374.0 154.2" stroke="#888" stroke-width="0.5" fill="none"/>
<path d="M400.0 151.8 L400.0 154.2" stroke="#888" stroke-width="0.5" fill="none"/>
<path d="M430.0 151.8 L430.0 154.2" stroke="#888" stroke-width="0.5" fill="none"/>
<path d="M440.0 151.8 L440.0 154.2" stroke="#888" stroke-width="0.5" fill="none"/>
<path d="M462.0 151.8 L462.0 154.2" stroke="#888" stroke-width="0.5" fill="none"/>
<path d="M472.0 151.8 L472.0 154.2" stroke="#888" stroke-width="0.5" fill="none"/>
<path d="M486.0 151.8 L486.0 154.2" stroke="#888" stroke-width="0.5" fill="none"/>
<path d="M493.0 151.8 L493.0 154.2" stroke="#888" stroke-width="0.5" fill="none"/>
<path d="M503.0 151.8 L503.0 154.2" stroke="#888" stroke-width="0.5" fill="none"/>
<path d="M511.0 151.8 L511.0 154.2" stroke="#888" stroke-width="0.5" fill="none"/>
<path d="M523.0 151.8 L523.0 154.2" stroke="#888" stroke-width="0.5" fill="none"/>
<path d="M545.0 151.8 L545.0 154.2" stroke="#888" stroke-width="0.5" fill="none"/>
<path d="M575.0 151.8 L575.0 154.2" stroke="#888" stroke-width="0.5" fill="none"/>
<path d="M594.5 151.8 L594.5 154.2" stroke="#888" stroke-width="0.5" fill="none"/>
<path d="M655.0 151.8 L655.0 154.2" stroke="#888" stroke-width="0.5" fill="none"/>
<path d="M717.0 151.8 L717.0 154.2" stroke="#888" stroke-width="0.5" fill="none"/>
<path d="M197.5 510.5 L197.5 512.9" stroke="#888" stroke-width="0.5" fill="none"/>
<path d="M208.0 510.5 L208.0 512.9" stroke="#888" stroke-width="0.5" fill="none"/>
<path d="M222.0 510.5 L222.0 512.9" stroke="#888" stroke-width="0.5" fill="none"/>
<path d="M250.0 510.5 L250.0 512.9" stroke="#888" stroke-width="0.5" fill="none"/>
<path d="M272.0 510.5 L272.0 512.9" stroke="#888" stroke-width="0.5" fill="none"/>
<path d="M288.0 510.5 L288.0 512.9" stroke="#888" stroke-width="0.5" fill="none"/>
<path d="M298.0 510.5 L298.0 512.9" stroke="#888" stroke-width="0.5" fill="none"/>
<path d="M598.0 510.5 L598.0 512.9" stroke="#888" stroke-width="0.5" fill="none"/>
<path d="M717.5 510.5 L717.5 512.9" stroke="#888" stroke-width="0.5" fill="none"/>
<path d="M197.5 517.8 L197.5 520.2" stroke="#888" stroke-width="0.5" fill="none"/>
<path d="M298.0 517.8 L298.0 520.2" stroke="#888" stroke-width="0.5" fill="none"/>
<path d="M598.0 517.8 L598.0 520.2" stroke="#888" stroke-width="0.5" fill="none"/>
<path d="M717.5 517.8 L717.5 520.2" stroke="#888" stroke-width="0.5" fill="none"/>
<path d="M373.0 404.8 L373.0 407.2" stroke="#888" stroke-width="0.5" fill="none"/>
<path d="M395.0 404.8 L395.0 407.2" stroke="#888" stroke-width="0.5" fill="none"/>
<path d="M400.0 404.8 L400.0 407.2" stroke="#888" stroke-width="0.5" fill="none"/>
<path d="M436.0 404.8 L436.0 407.2" stroke="#888" stroke-width="0.5" fill="none"/>
<path d="M452.0 404.8 L452.0 407.2" stroke="#888" stroke-width="0.5" fill="none"/>
<path d="M510.0 404.8 L510.0 407.2" stroke="#888" stroke-width="0.5" fill="none"/>
<path d="M545.0 404.8 L545.0 407.2" stroke="#888" stroke-width="0.5" fill="none"/>
<path d="M598.0 404.8 L598.0 407.2" stroke="#888" stroke-width="0.5" fill="none"/>
<path d="M373.0 412.4 L373.0 414.8" stroke="#888" stroke-width="0.5" fill="none"/>
<path d="M598.0 412.4 L598.0 414.8" stroke="#888" stroke-width="0.5" fill="none"/>
<path d="M181.3 161.0 L183.7 161.0" stroke="#888" stroke-width="0.5" fill="none"/>
<path d="M181.3 225.0 L183.7 225.0" stroke="#888" stroke-width="0.5" fill="none"/>
<path d="M181.3 286.0 L183.7 286.0" stroke="#888" stroke-width="0.5" fill="none"/>
<path d="M181.3 348.0 L183.7 348.0" stroke="#888" stroke-width="0.5" fill="none"/>
<path d="M181.3 387.0 L183.7 387.0" stroke="#888" stroke-width="0.5" fill="none"/>
<path d="M181.3 424.0 L183.7 424.0" stroke="#888" stroke-width="0.5" fill="none"/>
<path d="M181.3 504.0 L183.7 504.0" stroke="#888" stroke-width="0.5" fill="none"/>
<path d="M188.8 161.0 L191.2 161.0" stroke="#888" stroke-width="0.5" fill="none"/>
<path d="M188.8 180.0 L191.2 180.0" stroke="#888" stroke-width="0.5" fill="none"/>
<path d="M188.8 210.0 L191.2 210.0" stroke="#888" stroke-width="0.5" fill="none"/>
<path d="M188.8 225.0 L191.2 225.0" stroke="#888" stroke-width="0.5" fill="none"/>
<path d="M188.8 232.0 L191.2 232.0" stroke="#888" stroke-width="0.5" fill="none"/>
<path d="M188.8 258.0 L191.2 258.0" stroke="#888" stroke-width="0.5" fill="none"/>
<path d="M188.8 286.0 L191.2 286.0" stroke="#888" stroke-width="0.5" fill="none"/>
<path d="M188.8 290.0 L191.2 290.0" stroke="#888" stroke-width="0.5" fill="none"/>
<path d="M188.8 330.0 L191.2 330.0" stroke="#888" stroke-width="0.5" fill="none"/>
<path d="M188.8 348.0 L191.2 348.0" stroke="#888" stroke-width="0.5" fill="none"/>
<path d="M188.8 355.0 L191.2 355.0" stroke="#888" stroke-width="0.5" fill="none"/>
<path d="M188.8 382.0 L191.2 382.0" stroke="#888" stroke-width="0.5" fill="none"/>
<path d="M188.8 387.0 L191.2 387.0" stroke="#888" stroke-width="0.5" fill="none"/>
<path d="M188.8 395.0 L191.2 395.0" stroke="#888" stroke-width="0.5" fill="none"/>
<path d="M188.8 420.0 L191.2 420.0" stroke="#888" stroke-width="0.5" fill="none"/>
<path d="M188.8 424.0 L191.2 424.0" stroke="#888" stroke-width="0.5" fill="none"/>
<path d="M188.8 448.0 L191.2 448.0" stroke="#888" stroke-width="0.5" fill="none"/>
<path d="M188.8 488.0 L191.2 488.0" stroke="#888" stroke-width="0.5" fill="none"/>
<path d="M188.8 504.0 L191.2 504.0" stroke="#888" stroke-width="0.5" fill="none"/>
<path d="M304.6 161.0 L307.0 161.0" stroke="#888" stroke-width="0.5" fill="none"/>
<path d="M304.6 180.0 L307.0 180.0" stroke="#888" stroke-width="0.5" fill="none"/>
<path d="M304.6 210.0 L307.0 210.0" stroke="#888" stroke-width="0.5" fill="none"/>
<path d="M304.6 264.0 L307.0 264.0" stroke="#888" stroke-width="0.5" fill="none"/>
<path d="M312.1 161.0 L314.5 161.0" stroke="#888" stroke-width="0.5" fill="none"/>
<path d="M312.1 264.0 L314.5 264.0" stroke="#888" stroke-width="0.5" fill="none"/>
<path d="M723.1 160.5 L725.5 160.5" stroke="#888" stroke-width="0.5" fill="none"/>
<path d="M723.1 174.5 L725.5 174.5" stroke="#888" stroke-width="0.5" fill="none"/>
<path d="M723.1 334.0 L725.5 334.0" stroke="#888" stroke-width="0.5" fill="none"/>
<path d="M723.1 353.0 L725.5 353.0" stroke="#888" stroke-width="0.5" fill="none"/>
<path d="M723.1 364.0 L725.5 364.0" stroke="#888" stroke-width="0.5" fill="none"/>
<path d="M723.1 392.0 L725.5 392.0" stroke="#888" stroke-width="0.5" fill="none"/>
<path d="M723.1 398.0 L725.5 398.0" stroke="#888" stroke-width="0.5" fill="none"/>
<path d="M723.1 415.0 L725.5 415.0" stroke="#888" stroke-width="0.5" fill="none"/>
<path d="M723.1 452.0 L725.5 452.0" stroke="#888" stroke-width="0.5" fill="none"/>
<path d="M723.1 462.0 L725.5 462.0" stroke="#888" stroke-width="0.5" fill="none"/>
<path d="M723.1 470.0 L725.5 470.0" stroke="#888" stroke-width="0.5" fill="none"/>
<path d="M723.1 478.0 L725.5 478.0" stroke="#888" stroke-width="0.5" fill="none"/>
<path d="M723.1 484.0 L725.5 484.0" stroke="#888" stroke-width="0.5" fill="none"/>
<path d="M723.1 490.0 L725.5 490.0" stroke="#888" stroke-width="0.5" fill="none"/>
<path d="M723.1 504.0 L725.5 504.0" stroke="#888" stroke-width="0.5" fill="none"/>
<path d="M730.8 160.5 L733.2 160.5" stroke="#888" stroke-width="0.5" fill="none"/>
<path d="M730.8 174.5 L733.2 174.5" stroke="#888" stroke-width="0.5" fill="none"/>
<path d="M730.8 334.0 L733.2 334.0" stroke="#888" stroke-width="0.5" fill="none"/>
<path d="M730.8 398.0 L733.2 398.0" stroke="#888" stroke-width="0.5" fill="none"/>
<path d="M730.8 452.0 L733.2 452.0" stroke="#888" stroke-width="0.5" fill="none"/>
<path d="M730.8 504.0 L733.2 504.0" stroke="#888" stroke-width="0.5" fill="none"/>
<path d="M738.3 160.5 L740.7 160.5" stroke="#888" stroke-width="0.5" fill="none"/>
<path d="M738.3 504.0 L740.7 504.0" stroke="#888" stroke-width="0.5" fill="none"/>
<text x="456.0" y="137.6" font-size="2.7" fill="#666" text-anchor="middle" >94'-4 1/2"</text>
<text x="248.5" y="144.8" font-size="2.7" fill="#666" text-anchor="middle" >18'-5 1/4"</text>
<text x="336.0" y="144.8" font-size="2.7" fill="#666" text-anchor="middle" >13'-9 3/8"</text>
<text x="483.7" y="144.8" font-size="2.7" fill="#666" text-anchor="middle" >40'-2 1/8"</text>
<text x="654.7" y="144.8" font-size="2.7" fill="#666" text-anchor="middle" >22'-4 3/8"</text>
<text x="213.6" y="151.8" font-size="2.7" fill="#666" text-anchor="middle" >2'-8" 3'-3 3/8" 2'-8"</text>
<text x="248.0" y="151.8" font-size="2.7" fill="#666" text-anchor="middle" >5'-1 1/4"</text>
<text x="284.0" y="151.8" font-size="2.7" fill="#666" text-anchor="middle" >2'-8" 3'-3 3/8" 2'-8" 1'-7"</text>
<text x="303.5" y="151.8" font-size="2.7" fill="#666" text-anchor="middle" >1'-9 7/8"</text>
<text x="336.6" y="151.8" font-size="2.7" fill="#666" text-anchor="middle" >13'-9 3/8"</text>
<text x="369.0" y="151.8" font-size="2.7" fill="#666" text-anchor="middle" >1'-9 7/8"</text>
<text x="387.3" y="151.8" font-size="2.7" fill="#666" text-anchor="middle" >4'-11"</text>
<text x="415.6" y="151.8" font-size="2.7" fill="#666" text-anchor="middle" >3'-1" 5'-10 7/8" 2'"</text>
<text x="448.7" y="151.8" font-size="2.7" fill="#666" text-anchor="middle" >3'-11 1/4"</text>
<text x="485.5" y="151.8" font-size="2.7" fill="#666" text-anchor="middle" >8'-5 1/2" 1'-1 3/4"</text>
<text x="523.5" y="151.8" font-size="2.7" fill="#666" text-anchor="middle" >7'-5 1/2"</text>
<text x="558.0" y="151.8" font-size="2.7" fill="#666" text-anchor="middle" >4'-0" 5'-10 7/8"</text>
<text x="583.0" y="151.8" font-size="2.7" fill="#666" text-anchor="middle" >3'-5 3/8"</text>
<text x="625.5" y="151.8" font-size="2.7" fill="#666" text-anchor="middle" >10'-8 3/4"</text>
<text x="654.5" y="151.8" font-size="2.7" fill="#666" text-anchor="middle" >1'-4"</text>
<text x="685.0" y="151.8" font-size="2.7" fill="#666" text-anchor="middle" >10'-8 3/4"</text>
<text x="217.0" y="155.6" font-size="2.7" fill="#666" text-anchor="middle" >3'-3 3/8"</text>
<text x="281.0" y="155.6" font-size="2.7" fill="#666" text-anchor="middle" >3'-3 3/8"</text>
<text x="415.0" y="155.6" font-size="2.7" fill="#666" text-anchor="middle" >5'-10 7/8"</text>
<text x="558.0" y="155.6" font-size="2.7" fill="#666" text-anchor="middle" >5'-10 7/8"</text>
<text x="213.6" y="510.5" font-size="2.7" fill="#666" text-anchor="middle" >2'-8" 3'-3 3/8" 2'-8"</text>
<text x="240.0" y="510.5" font-size="2.7" fill="#666" text-anchor="middle" >5'-1 1/4"</text>
<text x="281.0" y="510.5" font-size="2.7" fill="#666" text-anchor="middle" >2'-8" 3'-3 3/8" 2'-8" 1'-7"</text>
<text x="447.0" y="510.5" font-size="2.7" fill="#666" text-anchor="middle" >54'-5 3/8"</text>
<text x="658.7" y="510.5" font-size="2.7" fill="#666" text-anchor="middle" >21'-7 3/8"</text>
<text x="217.0" y="514.3" font-size="2.7" fill="#666" text-anchor="middle" >3'-3 3/8"</text>
<text x="281.0" y="514.3" font-size="2.7" fill="#666" text-anchor="middle" >3'-3 3/8"</text>
<text x="247.0" y="518.0" font-size="2.7" fill="#666" text-anchor="middle" >18'-5 1/4"</text>
<text x="447.0" y="518.0" font-size="2.7" fill="#666" text-anchor="middle" >54'-5 3/8"</text>
<text x="658.7" y="518.0" font-size="2.7" fill="#666" text-anchor="middle" >21'-7 3/8"</text>
<text x="384.0" y="405.0" font-size="2.7" fill="#666" text-anchor="middle" >3'-11 1/4"</text>
<text x="415.0" y="405.0" font-size="2.7" fill="#666" text-anchor="middle" >6'-6 3/4" 2'-11 3/8"</text>
<text x="440.0" y="405.0" font-size="2.7" fill="#666" text-anchor="middle" >2'-11 3/8"</text>
<text x="486.0" y="405.0" font-size="2.7" fill="#666" text-anchor="middle" >10'-6" 5'-10 7/8"</text>
<text x="571.0" y="405.0" font-size="2.7" fill="#666" text-anchor="middle" >12'-6 1/8"</text>
<text x="486.0" y="412.5" font-size="2.7" fill="#666" text-anchor="middle" >39'-11 3/8"</text>
<text x="181.3" y="193.0" font-size="2.7" fill="#666" text-anchor="middle" transform="rotate(-90 181.3 193.0)">11'-2 1/4"</text>
<text x="181.3" y="256.0" font-size="2.7" fill="#666" text-anchor="middle" transform="rotate(-90 181.3 256.0)">10'-9 7/8"</text>
<text x="181.3" y="317.0" font-size="2.7" fill="#666" text-anchor="middle" transform="rotate(-90 181.3 317.0)">10'-11 7/8"</text>
<text x="181.3" y="367.0" font-size="2.7" fill="#666" text-anchor="middle" transform="rotate(-90 181.3 367.0)">7'-0 5/8"</text>
<text x="181.3" y="405.0" font-size="2.7" fill="#666" text-anchor="middle" transform="rotate(-90 181.3 405.0)">6'-8 3/4"</text>
<text x="181.3" y="464.0" font-size="2.7" fill="#666" text-anchor="middle" transform="rotate(-90 181.3 464.0)">14'-4 1/2"</text>
<text x="188.8" y="181.0" font-size="2.7" fill="#666" text-anchor="middle" transform="rotate(-90 188.8 181.0)">2'-8" 3'-3 3/8" 2'-8"</text>
<text x="188.8" y="213.0" font-size="2.7" fill="#666" text-anchor="middle" transform="rotate(-90 188.8 213.0)">5'-1 1/4"</text>
<text x="188.8" y="248.5" font-size="2.7" fill="#666" text-anchor="middle" transform="rotate(-90 188.8 248.5)">3'-1" 6'-6 3/4" 2'-4"</text>
<text x="188.8" y="280.0" font-size="2.7" fill="#666" text-anchor="middle" transform="rotate(-90 188.8 280.0)">4'-3"</text>
<text x="188.8" y="310.0" font-size="2.7" fill="#666" text-anchor="middle" transform="rotate(-90 188.8 310.0)">3'-1" 5'-10 7/8" 2'"</text>
<text x="188.8" y="339.0" font-size="2.7" fill="#666" text-anchor="middle" transform="rotate(-90 188.8 339.0)">4'-1"</text>
<text x="188.8" y="358.0" font-size="2.7" fill="#666" text-anchor="middle" transform="rotate(-90 188.8 358.0)">2'-7 1/2"</text>
<text x="188.8" y="378.0" font-size="2.7" fill="#666" text-anchor="middle" transform="rotate(-90 188.8 378.0)">4'-7"</text>
<text x="188.8" y="403.5" font-size="2.7" fill="#666" text-anchor="middle" transform="rotate(-90 188.8 403.5)">4'-7 1/8"</text>
<text x="188.8" y="442.0" font-size="2.7" fill="#666" text-anchor="middle" transform="rotate(-90 188.8 442.0)">9'-2 1/4"</text>
<text x="188.8" y="482.0" font-size="2.7" fill="#666" text-anchor="middle" transform="rotate(-90 188.8 482.0)">2'-8" 4'-11" 1'-4"</text>
<text x="192.6" y="181.0" font-size="2.7" fill="#666" text-anchor="middle" transform="rotate(-90 192.6 181.0)">3'-3 3/8"</text>
<text x="192.6" y="248.5" font-size="2.7" fill="#666" text-anchor="middle" transform="rotate(-90 192.6 248.5)">6'-6 3/4"</text>
<text x="192.6" y="310.0" font-size="2.7" fill="#666" text-anchor="middle" transform="rotate(-90 192.6 310.0)">5'-10 7/8"</text>
<text x="192.6" y="482.0" font-size="2.7" fill="#666" text-anchor="middle" transform="rotate(-90 192.6 482.0)">4'-11"</text>
<text x="304.6" y="181.0" font-size="2.7" fill="#666" text-anchor="middle" transform="rotate(-90 304.6 181.0)">2'-8" 3'-3 3/8" 2'-8"</text>
<text x="308.4" y="181.0" font-size="2.7" fill="#666" text-anchor="middle" transform="rotate(-90 308.4 181.0)">3'-3 3/8"</text>
<text x="304.6" y="232.0" font-size="2.7" fill="#666" text-anchor="middle" transform="rotate(-90 304.6 232.0)">12'-5 1/2"</text>
<text x="312.1" y="212.0" font-size="2.7" fill="#666" text-anchor="middle" transform="rotate(-90 312.1 212.0)">18'-9 5/8"</text>
<text x="578.2" y="198.0" font-size="2.7" fill="#666" text-anchor="middle" transform="rotate(-90 578.2 198.0)">9'-1 3/8"</text>
<text x="356.7" y="243.0" font-size="2.7" fill="#666" text-anchor="middle" transform="rotate(-90 356.7 243.0)">7'-2 5/8"</text>
<text x="723.1" y="254.0" font-size="2.7" fill="#666" text-anchor="middle" transform="rotate(-90 723.1 254.0)">28'-8 3/4"</text>
<text x="730.8" y="254.0" font-size="2.7" fill="#666" text-anchor="middle" transform="rotate(-90 730.8 254.0)">28'-8 3/4"</text>
<text x="723.1" y="167.5" font-size="2.7" fill="#666" text-anchor="middle" transform="rotate(-90 723.1 167.5)">2'-5 7/8"</text>
<text x="730.8" y="167.5" font-size="2.7" fill="#666" text-anchor="middle" transform="rotate(-90 730.8 167.5)">2'-5 7/8"</text>
<text x="723.1" y="343.0" font-size="2.7" fill="#666" text-anchor="middle" transform="rotate(-90 723.1 343.0)">3'-5 3/8"</text>
<text x="723.1" y="378.0" font-size="2.7" fill="#666" text-anchor="middle" transform="rotate(-90 723.1 378.0)">4'-11" 5'-10 7/8"</text>
<text x="730.8" y="392.0" font-size="2.7" fill="#666" text-anchor="middle" transform="rotate(-90 730.8 392.0)">36'-1"</text>
<text x="723.1" y="425.0" font-size="2.7" fill="#666" text-anchor="middle" transform="rotate(-90 723.1 425.0)">10'-11 7/8"</text>
<text x="723.1" y="477.0" font-size="2.7" fill="#666" text-anchor="middle" transform="rotate(-90 723.1 477.0)">2'-8" 3'-3 3/8" 2'-4"</text>
<text x="726.8" y="477.0" font-size="2.7" fill="#666" text-anchor="middle" transform="rotate(-90 726.8 477.0)">3'-3 3/8"</text>
<text x="730.8" y="478.0" font-size="2.7" fill="#666" text-anchor="middle" transform="rotate(-90 730.8 478.0)">9'-6 1/8"</text>
<text x="738.3" y="333.0" font-size="2.7" fill="#666" text-anchor="middle" transform="rotate(-90 738.3 333.0)">62'-4"</text>
<text x="336.0" y="309.0" font-size="2.7" fill="#666" text-anchor="middle" >3'-5" 8'-5 7/8" 1'-9"</text>
<text x="336.0" y="315.4" font-size="2.7" fill="#666" text-anchor="middle" >13'-9 3/8"</text>
<text x="304.6" y="340.0" font-size="2.7" fill="#666" text-anchor="middle" transform="rotate(-90 304.6 340.0)">2'-8" 6'-6 3/4" 4'-3" 6'-6 3/4"</text>
<text x="308.4" y="340.0" font-size="2.7" fill="#666" text-anchor="middle" transform="rotate(-90 308.4 340.0)">6'-6 3/4"</text>
<text x="304.6" y="420.0" font-size="2.7" fill="#666" text-anchor="middle" transform="rotate(-90 304.6 420.0)">11'-9 3/4"</text>
<text x="312.1" y="380.0" font-size="2.7" fill="#666" text-anchor="middle" transform="rotate(-90 312.1 380.0)">26'-4 1/8"</text>
<text x="354.8" y="345.0" font-size="2.7" fill="#666" text-anchor="middle" transform="rotate(-90 354.8 345.0)">13'-1 1/2"</text>
<text x="354.8" y="391.0" font-size="2.7" fill="#666" text-anchor="middle" transform="rotate(-90 354.8 391.0)">1'-7 3/4"</text>
<text x="250.5" y="189.4" font-size="3.3" fill="#5a5048" text-anchor="middle" >Bedroom</text>
<text x="250.5" y="196.9" font-size="3.3" fill="#5a5048" text-anchor="middle" >162.19 ft²</text>
<text x="220.0" y="216.5" font-size="3.3" fill="#5a5048" text-anchor="middle" >ROOM 20</text>
<text x="220.0" y="223.1" font-size="3.3" fill="#5a5048" text-anchor="middle" >11.27 ft²</text>
<text x="232.0" y="253.6" font-size="3.3" fill="#5a5048" text-anchor="middle" >Bedroom</text>
<text x="232.0" y="261.0" font-size="3.3" fill="#5a5048" text-anchor="middle" >115.28 ft²</text>
<text x="267.0" y="242.0" font-size="3.3" fill="#5a5048" text-anchor="middle" >W.I.C</text>
<text x="267.0" y="248.8" font-size="3.3" fill="#5a5048" text-anchor="middle" >11.24 ft²</text>
<text x="336.0" y="282.5" font-size="3.3" fill="#5a5048" text-anchor="middle" >Hall</text>
<text x="336.0" y="289.9" font-size="3.3" fill="#5a5048" text-anchor="middle" >97.48 ft²</text>
<text x="284.5" y="302.7" font-size="3.3" fill="#5a5048" text-anchor="middle" >Clearance</text>
<text x="284.5" y="310.1" font-size="3.3" fill="#5a5048" text-anchor="middle" >113.85 ft²</text>
<text x="232.0" y="313.0" font-size="3.3" fill="#5a5048" text-anchor="middle" >Bedroom</text>
<text x="232.0" y="320.4" font-size="3.3" fill="#5a5048" text-anchor="middle" >116.93 ft²</text>
<text x="267.0" y="325.0" font-size="3.3" fill="#5a5048" text-anchor="middle" >W.I.C</text>
<text x="267.0" y="331.8" font-size="3.3" fill="#5a5048" text-anchor="middle" >11.24 ft²</text>
<text x="236.0" y="364.7" font-size="3.3" fill="#5a5048" text-anchor="middle" >Bathroom</text>
<text x="236.0" y="372.1" font-size="3.3" fill="#5a5048" text-anchor="middle" >81.08 ft²</text>
<text x="236.0" y="402.7" font-size="3.3" fill="#5a5048" text-anchor="middle" >Bathroom</text>
<text x="236.0" y="410.1" font-size="3.3" fill="#5a5048" text-anchor="middle" >76.54 ft²</text>
<text x="236.0" y="427.0" font-size="3.3" fill="#5a5048" text-anchor="middle" >W.I.C</text>
<text x="236.0" y="433.8" font-size="3.3" fill="#5a5048" text-anchor="middle" >20.41 ft²</text>
<text x="253.6" y="457.0" font-size="3.3" fill="#5a5048" text-anchor="middle" >Master bedroom</text>
<text x="253.6" y="464.4" font-size="3.3" fill="#5a5048" text-anchor="middle" >224.10 ft²</text>
<text x="336.0" y="346.0" font-size="3.3" fill="#5a5048" text-anchor="middle" >Patio</text>
<text x="336.0" y="353.4" font-size="3.3" fill="#5a5048" text-anchor="middle" >187.31 ft²</text>
<text x="408.0" y="241.5" font-size="3.3" fill="#5a5048" text-anchor="middle" >Laundry / Utility</text>
<text x="408.0" y="248.9" font-size="3.3" fill="#5a5048" text-anchor="middle" >72.75 ft²</text>
<text x="451.0" y="241.5" font-size="3.3" fill="#5a5048" text-anchor="middle" >Toilet</text>
<text x="451.0" y="248.9" font-size="3.3" fill="#5a5048" text-anchor="middle" >24.67 ft²</text>
<text x="487.0" y="242.6" font-size="3.3" fill="#5a5048" text-anchor="middle" >Entry</text>
<text x="487.0" y="250.0" font-size="3.3" fill="#5a5048" text-anchor="middle" >57.24 ft²</text>
<text x="516.0" y="241.0" font-size="3.3" fill="#5a5048" text-anchor="middle" >W.I.C</text>
<text x="516.0" y="248.4" font-size="3.3" fill="#5a5048" text-anchor="middle" >10.71 ft²</text>
<text x="558.0" y="255.5" font-size="3.3" fill="#5a5048" text-anchor="middle" >Office / Bedroom</text>
<text x="558.0" y="262.9" font-size="3.3" fill="#5a5048" text-anchor="middle" >146.61 ft²</text>
<text x="655.8" y="251.0" font-size="3.3" fill="#5a5048" text-anchor="middle" >Garage</text>
<text x="655.8" y="258.4" font-size="3.3" fill="#5a5048" text-anchor="middle" >557.85 ft²</text>
<text x="485.0" y="309.5" font-size="3.3" fill="#5a5048" text-anchor="middle" >Living room - Dinning room - Kitchen</text>
<text x="485.0" y="316.9" font-size="3.3" fill="#5a5048" text-anchor="middle" >828.69 ft²</text>
<text x="443.0" y="421.0" font-size="3.3" fill="#5a5048" text-anchor="middle" >Terrace</text>
<text x="443.0" y="428.6" font-size="3.3" fill="#5a5048" text-anchor="middle" >528.42 ft²</text>
<path d="M443.8 358.8 L443.8 472" stroke="#555" stroke-width="0.55"/>
<circle cx="443.8" cy="354.8" r="2.2" fill="#111"/><path d="M443.8 347.8 l2.6 3.4 h-5.2 Z M443.8 361.8 l2.6 -3.4 h-5.2 Z M436.8 354.8 l3.4 -2.6 v5.2 Z M450.8 354.8 l-3.4 -2.6 v5.2 Z" fill="#111"/>
<rect x="436" y="475" width="16.5" height="5" rx="0.8" fill="#555"/><rect x="441" y="472" width="6.5" height="3.5" fill="#555"/></svg>
<div class="btn" style="left:250px;top:94px;width:23px;height:13.5px"><svg class="abs" style="left:6.5px;top:2.5px" width="10" height="9" viewBox="0 0 10 9" fill="none" stroke="#fff" stroke-width="1.1" stroke-linecap="round" stroke-linejoin="round"><path d="M1 3 V2.5 H8 M6.3 0.8 L8 2.5 L6.3 4.2 M9 6 V6.5 H2 M3.7 4.8 L2 6.5 L3.7 8.2" stroke-width="1.3"/></svg></div>
<div class="btn" style="left:286px;top:94px;width:104px;height:13.5px"><svg class="abs" style="left:4px;top:2px" width="6" height="10" viewBox="0 0 6 10"><path d="M3 0.5 L5.5 4 H0.5 Z" fill="#fff"/><path d="M3 9.5 L5.5 6 H0.5 Z" fill="#999"/></svg><div class="abs" style="left:13.5px;top:2px;width:1px;height:10px;background:#555"></div><div class="abs lbl" style="left:19px;top:0.8px;line-height:13.5px;transform:scaleX(.92);transform-origin:0 50%">Ground Floor</div><svg class="abs" style="left:92px;top:4.5px" width="7" height="5" viewBox="0 0 7 5" fill="none" stroke="#fff" stroke-width="1.1" stroke-linecap="round" stroke-linejoin="round"><path d="M1 1 L3.5 3.5 L6 1" stroke-width="1.4"/></svg></div>
<div class="btn" style="left:402px;top:94px;width:46px;height:13.5px"><svg class="abs" style="left:7px;top:4px" width="9" height="6" viewBox="0 0 9 6" fill="none" stroke="#fff" stroke-width="1.1" stroke-linecap="round" stroke-linejoin="round" stroke="#bbb"><path d="M1.2 4.5 Q4.5 -0.5 7.8 4.5 M1 2 L1.2 4.6 L3.6 4.2" stroke="#bbb"/></svg><div class="abs" style="left:23px;top:2px;width:1px;height:10px;background:#555"></div><svg class="abs" style="left:30px;top:4px" width="9" height="6" viewBox="0 0 9 6" fill="none" stroke="#fff" stroke-width="1.1" stroke-linecap="round" stroke-linejoin="round"><path d="M1.2 4.5 Q4.5 -0.5 7.8 4.5 M8 2 L7.8 4.6 L5.4 4.2" stroke="#bbb"/></svg></div>
<div class="btn" style="left:672.5px;top:94px;width:22.5px;height:13.5px"><svg class="abs" style="left:6.5px;top:2px" width="10" height="10" viewBox="0 0 10 10"><path d="M1 3 L4 1 L7 2.5 L7 5 L9 6 L9 8.5 L5 9.8 L1 7.5 Z" fill="#ddd"/><path d="M1 3 L4 4.5 L7 2.5 M4 4.5 V7 L5 8" stroke="#555" stroke-width="0.6" fill="none"/></svg></div>
<div class="btn" style="left:708px;top:94px;width:80px;height:13.5px"><svg class="abs" style="left:4px;top:2.5px" width="14" height="9" viewBox="0 0 14 9" fill="none" stroke="#fff" stroke-width="1.1" stroke-linecap="round" stroke-linejoin="round"><path d="M0.8 4.5 Q7 -2.5 13.2 4.5 Q7 11.5 0.8 4.5 Z" stroke-width="1"/><circle cx="7" cy="4.5" r="2.2" stroke-width="1"/></svg><div class="abs lbl" style="left:20.5px;top:0.8px;line-height:13.5px;transform:scaleX(.88);transform-origin:0 50%">Show settings</div><svg class="abs" style="left:69px;top:4.5px" width="7" height="5" viewBox="0 0 7 5" fill="none" stroke="#fff" stroke-width="1.1" stroke-linecap="round" stroke-linejoin="round"><path d="M1 1 L3.5 3.5 L6 1" stroke-width="1.4"/></svg></div>
<div class="btn btnb" style="left:671.5px;top:548.3px;width:45.5px;height:13.7px"><svg class="abs" style="left:6px;top:2.5px" width="10" height="10" viewBox="0 0 10 10" fill="none" stroke="#fff" stroke-width="1.1" stroke-linecap="round" stroke-linejoin="round"><circle cx="4" cy="4" r="2.8" stroke-width="1.1"/><path d="M6.2 6.2 L9 9" stroke-width="1.6"/><path d="M2.8 4 H5.2 M4 2.8 V5.2" stroke-width="0.8"/></svg><svg class="abs" style="left:29px;top:2.5px" width="10" height="10" viewBox="0 0 10 10" fill="none" stroke="#fff" stroke-width="1.1" stroke-linecap="round" stroke-linejoin="round"><circle cx="4" cy="4" r="2.8" stroke-width="1.1"/><path d="M6.2 6.2 L9 9" stroke-width="1.6"/><path d="M2.8 4 H5.2" stroke-width="0.8"/></svg></div>
<div class="btn btnb" style="left:729.5px;top:548.3px;width:59px;height:13.7px"><svg class="abs" style="left:4px;top:2px" width="7" height="10" viewBox="0 0 7 10" fill="none" stroke="#fff" stroke-width="1.1" stroke-linecap="round" stroke-linejoin="round"><rect x="0.8" y="0.8" width="5.4" height="8.4" rx="2.5" stroke-width="0.9" stroke="#ccc"/><path d="M0.8 4 H6.2 M3.5 0.8 V4" stroke-width="0.6" stroke="#ccc"/></svg><div class="abs lbl" style="left:14.8px;top:0.6px;line-height:13.5px;transform:scaleX(.93);transform-origin:0 50%">Navigate</div><svg class="abs" style="left:48.5px;top:4px" width="7" height="5" viewBox="0 0 7 5" fill="none" stroke="#fff" stroke-width="1.1" stroke-linecap="round" stroke-linejoin="round"><path d="M1 4 L3.5 1.5 L6 4" stroke-width="1.4"/></svg></div>
<div id="right">
<svg class="abs" style="left:0.7px;top:0" width="208.3" height="116" viewBox="8 10 977 544" preserveAspectRatio="none"><defs><radialGradient id="tr" cx="0.5" cy="0.5" r="0.5"><stop offset="0" stop-color="#263f1c" stop-opacity="1"/><stop offset="0.75" stop-color="#2a4f1e" stop-opacity="0.85"/><stop offset="1" stop-color="#2b6a1d" stop-opacity="0"/></radialGradient><linearGradient id="gr" x1="0" y1="0" x2="0" y2="1"><stop offset="0" stop-color="#30821f"/><stop offset="0.55" stop-color="#2e7c1e"/><stop offset="1" stop-color="#27691a"/></linearGradient></defs><rect x="0" y="0" width="985" height="563" fill="url(#gr)"/><rect x="8" y="10" width="977" height="5" fill="#93a08c"/><polygon points="56,12 74,12 20,222 8,222" fill="#d4d8d0"/><polygon points="948,12 965,12 985,95 985,130" fill="#d4d8d0"/><polygon points="513,10 575,10 575,92 513,92" fill="#8d8f91"/><polygon points="665,10 760,10 760,42 697,42 690,60 665,60" fill="#8f9193"/><polygon points="755,10 800,10 800,32 755,32" fill="#3a3a38"/><ellipse cx="905" cy="480" rx="135" ry="95" fill="url(#tr)"/><ellipse cx="860" cy="500" rx="85" ry="70" fill="url(#tr)"/><ellipse cx="930" cy="500" rx="90" ry="70" fill="url(#tr)"/><ellipse cx="950" cy="420" rx="60" ry="45" fill="url(#tr)" opacity="0.6"/><ellipse cx="960" cy="520" rx="90" ry="80" fill="url(#tr)"/><polygon points="183,26 312,26 340,30 346,128 296,138 300,330 305,405 300,490 252,490 250,488 86,488 120,350 150,200" fill="#141414"/><polygon points="192,32 305,32 300,88 182,88" fill="#2f6f98"/><polygon points="240,40 300,40 296,70 236,70" fill="#d8d4cc"/><polygon points="180,95 262,95 252,165 166,165" fill="#cfc5b8"/><polygon points="180,95 258,95 256,112 178,112" fill="#a0285f"/><polygon points="200,120 245,120 240,160 192,160" fill="#ece6dc"/><polygon points="164,172 250,172 240,243 146,243" fill="#d7cdbf"/><polygon points="166,172 254,172 252,188 164,188" fill="#b02a62"/><polygon points="195,195 238,195 232,240 186,240" fill="#efe8de"/><polygon points="143,250 240,250 234,300 132,300" fill="#aeb6bd"/><polygon points="175,258 232,258 228,296 168,296" fill="#dfe3e6"/><polygon points="130,307 234,307 228,358 118,358" fill="#d4d0c8"/><polygon points="128,315 160,315 152,352 120,352" fill="#2c3a2c"/><polygon points="186,318 226,318 222,350 180,350" fill="#3a3a3a"/><polygon points="116,365 262,365 250,482 92,482" fill="#c9b79f"/><polygon points="118,380 250,380 245,400 114,400" fill="#e6e0d6"/><polygon points="110,425 140,425 134,470 102,470" fill="#2d4a2d"/><polygon points="170,400 240,400 232,470 160,470" fill="#d8d2c6"/><polygon points="190,450 232,450 230,470 186,470" fill="#3c3c3c"/><polygon points="268,95 300,90 296,140 282,300 245,300 252,200" fill="#1d1d1f"/><polygon points="310,30 335,32 340,128 302,132" fill="#d9d9d6"/><polygon points="318,50 330,52 332,100 316,100" fill="#6a7a80"/><polygon points="240,307 270,305 300,405 296,487 254,487 262,365" fill="#b8b2a6"/><polygon points="262,420 292,420 290,480 258,480" fill="#3a4a3a"/><polygon points="296,138 405,138 402,178 290,178" fill="#1b1c20"/><polygon points="320,148 395,148 393,170 316,170" fill="#2e3338"/><polygon points="288,176 492,176 492,192 286,192" fill="#b4b1aa"/><polygon points="402,90 702,90 716,182 398,182" fill="#161616"/><polygon points="410,97 515,97 513,138 406,138" fill="#d6d2ca"/><polygon points="418,104 470,104 468,132 414,132" fill="#2c2c2c"/><polygon points="523,97 590,97 592,175 520,175" fill="#55504c"/><polygon points="530,100 580,100 580,130 530,130" fill="#1c1c1c"/><polygon points="535,140 585,140 588,178 530,178" fill="#a9a39b"/><polygon points="604,97 695,97 708,178 602,178" fill="#cfc3b4"/><polygon points="615,105 690,105 694,130 612,130" fill="#8a6f5a"/><polygon points="612,140 655,140 656,170 610,170" fill="#3a3030"/><polygon points="398,182 604,182 604,190 716,182 728,318 388,318" fill="#131313"/><polygon points="410,190 598,190 608,308 400,308" fill="#aaa59d"/><polygon points="445,210 485,210 485,285 442,285" fill="#e8e6e2"/><polygon points="520,220 570,220 572,280 518,280" fill="#b0764e"/><polygon points="608,190 712,188 722,310 612,310" fill="#8c6e58"/><polygon points="618,225 680,225 684,300 616,300" fill="#222020"/><polygon points="640,240 672,240 674,285 640,285" fill="#b9aa98"/><polygon points="288,197 398,197 390,322 722,322 716,408 306,408" fill="#a8abb4"/><polygon points="300,205 390,205 385,300 296,300" fill="#b0b3bb"/><polygon points="312,228 338,228 336,262 308,262" fill="#e6e2dc"/><polygon points="350,250 372,250 370,290 346,290" fill="#c98f60"/><polygon points="420,350 490,350 490,395 418,395" fill="#c9885c"/><polygon points="550,340 572,340 566,390 544,390" fill="#ecebe8"/><polygon points="585,345 605,345 600,395 580,395" fill="#ecebe8"/><polygon points="628,340 652,340 646,392 622,392" fill="#1c1c1c"/><polygon points="664,345 688,345 682,398 658,398" fill="#1c1c1c"/><polygon points="400,316 722,316 722,326 400,326" fill="#2a2a2a"/><polygon points="693,38 850,38 890,226 852,258 722,258 716,230" fill="#e9e9e6"/><polygon points="693,38 850,38 854,46 700,46" fill="#161616"/><polygon points="693,38 702,38 726,232 716,230" fill="#161616"/><polygon points="716,84 826,84 852,218 728,218" fill="#979a9c"/><polygon points="826,46 850,46 884,222 852,218" fill="#f4f4f2"/><polygon points="722,232 886,226 852,258 724,258" fill="#fbfbfa"/><path d="M850 38 L890 226 M716 230 L726 232" stroke="#161616" stroke-width="4" fill="none"/><polygon points="762,92 806,88 818,150 812,182 778,184 766,150" fill="#8e1420"/><polygon points="772,112 806,110 810,140 776,142" fill="#4a0a10"/><polygon points="728,110 740,110 742,160 730,160" fill="#3a3a3a"/><polygon points="403,52 412,52 416,92 408,92" fill="#e8e8e4"/><polygon points="573,52 582,52 580,92 572,92" fill="#e8e8e4"/><polygon points="388,494 425,474 432,484 397,502" fill="#e4e4e0"/><polygon points="120,489 215,489 215,505 118,505" fill="#c6b98e"/><rect x="218" y="500" width="228" height="53" fill="#50544f" opacity="0.93"/><rect x="487" y="500" width="146" height="53" fill="#50544f" opacity="0.93"/><rect x="668" y="500" width="73" height="53" fill="#50544f" opacity="0.93"/><path d="M293 506 V548 M372 506 V548 M560 506 V548" stroke="#747874" stroke-width="2.5"/><circle cx="256" cy="518" r="7" fill="none" stroke="#d4d4d4" stroke-width="3.5"/><path d="M242 544 Q256 524 270 544 Z" fill="none" stroke="#d4d4d4" stroke-width="3.5"/><path d="M314 540 Q333 502 354 540 M322 542 Q333 520 346 542" fill="none" stroke="#1aa8a4" stroke-width="4"/><path d="M396 510 H430 V538 H396 Z M405 518 V530 M412 518 H422" fill="none" stroke="#d4d4d4" stroke-width="3.5"/><circle cx="518" cy="520" r="11" fill="none" stroke="#d4d4d4" stroke-width="3.5"/><path d="M526 530 L540 544" stroke="#e6e6e6" stroke-width="6"/><path d="M512 520 H524 M518 514 V526" stroke="#e6e6e6" stroke-width="3"/><circle cx="594" cy="520" r="11" fill="none" stroke="#d4d4d4" stroke-width="3.5"/><path d="M602 530 L616 544" stroke="#e6e6e6" stroke-width="6"/><path d="M588 520 H600" stroke="#e6e6e6" stroke-width="3"/><rect x="692" y="508" width="26" height="36" rx="12" fill="none" stroke="#d4d4d4" stroke-width="3.5"/><path d="M692 522 H718 M705 508 V522" stroke="#e6e6e6" stroke-width="3"/></svg>
<div class="abs" style="left:6px;top:121px;width:99px;height:15px;background:#484848;border-top:2px solid #16b5ae"></div>
<div class="abs" style="left:6px;top:135.5px;width:198px;height:395.5px;background:#484848"></div>
<svg class="abs" style="left:11px;top:124px" width="15" height="10" viewBox="0 0 15 10" fill="none" stroke="#eee"><path d="M0.7 0.7 H14.3 V3 L13.5 3.8 V6 L14.3 6.8 V9.3 H0.7 Z" stroke-width="1.2" fill="#bdbdbd"/><path d="M3 3 V7 H6 M4.5 3 H7.5 V5.5 M9 7 H12 V4 M10 2.8 V5 H12" stroke-width="0.9" stroke="#333"/></svg>
<div class="abs" style="left:30.5px;top:123.6px;font-size:7.5px;font-weight:bold;line-height:12px;letter-spacing:-0.3px;transform:scaleX(.93);transform-origin:0 50%">Plan</div>
<div class="abs" id="pgf" style="left:11px;top:141px;font-size:10.5px;font-weight:bold;line-height:14px;letter-spacing:-0.4px;transform:scaleX(.875);transform-origin:0 50%;white-space:nowrap">Plan Ground Floor</div>
<div class="abs" style="left:151px;top:141px;width:48px;height:48px;background:#565656;border:1px solid #b0b0b0"><svg class="abs" style="left:3px;top:7px" width="41" height="32" viewBox="0 0 41 32" fill="none" stroke="#eee" stroke-width="1" stroke-linejoin="round"><path d="M2 12 L19 2.5 L28 6.5 L24 9 L38 15.5 L38 20 L25 28.5 L2 16.5 Z M2 12 L25 24 L38 15.5 M25 24 V28.5"/></svg></div>
<div class="abs" style="left:11px;top:177px;width:42px;height:15px;background:#585858;border-top:2px solid #16b5ae"></div>
<div class="abs" style="left:11px;top:191.5px;width:187.5px;height:333.0px;background:#585858"></div>
<svg class="abs" style="left:26.399999999999977px;top:179.8px" width="11" height="11" viewBox="0 0 9 9"><circle cx="4.5" cy="4.5" r="3.7" fill="none" stroke="#fff" stroke-width="1.05"/><path d="M4.5 4 V6.5" stroke="#fff" stroke-width="1.1"/><circle cx="4.5" cy="2.6" r="0.6" fill="#fff"/></svg>
<div class="abs" id="info" style="left:26.700000000000045px;top:202.5px;font-size:10.5px;font-weight:bold;line-height:14px;letter-spacing:-0.4px;transform:scaleX(.91);transform-origin:0 50%">Information</div>
<div class="abs" style="left:26.700000000000045px;top:225.3px;font-size:6.2px;line-height:7px;color:#a8a8a8">Name</div>
<div class="abs" id="gfn" style="left:26.700000000000045px;top:233.5px;font-size:6.5px;font-weight:bold;line-height:8px;letter-spacing:-0.2px;white-space:nowrap;transform:scaleX(.96);transform-origin:0 50%">Ground Floor</div>
<div class="abs" style="left:27px;top:243px;width:78px;height:0.6px;background:#a0a0a0"></div>
<div class="abs" style="left:19px;top:254.39999999999998px;width:172.5px;height:1px;background:#8a8a8a"></div>
<div class="abs" id="popt" style="left:26.700000000000045px;top:263.5px;font-size:10.5px;font-weight:bold;line-height:14px;letter-spacing:-0.4px;transform:scaleX(.862);transform-origin:0 50%;white-space:nowrap">Plan options</div>
<i class="cb cbs" style="position:absolute;left:25.799999999999955px;top:286.2px;width:8.6px;height:8.2px"></i>
<div class="abs opt" style="left:37.200000000000045px;top:286.7px;font-size:6.5px;font-weight:bold;line-height:8.5px;letter-spacing:-0.2px;transform:scaleX(.93);transform-origin:0 50%">Dimension</div>
<i class="cb cbs" style="position:absolute;left:25.799999999999955px;top:304.6px;width:8.6px;height:8.2px"></i>
<div class="abs opt" style="left:37.200000000000045px;top:305.1px;font-size:6.5px;font-weight:bold;line-height:8.5px;letter-spacing:-0.2px;transform:scaleX(.93);transform-origin:0 50%">Area</div>
<i class="cb cbs" style="position:absolute;left:25.799999999999955px;top:322.9px;width:8.6px;height:8.2px"></i>
<div class="abs opt" style="left:37.200000000000045px;top:323.4px;font-size:6.5px;font-weight:bold;line-height:8.5px;letter-spacing:-0.2px;transform:scaleX(.93);transform-origin:0 50%">Symbols</div>
<i class="cb cbs" style="position:absolute;left:25.799999999999955px;top:340.9px;width:8.6px;height:8.2px"></i>
<div class="abs opt" style="left:37.200000000000045px;top:341.4px;font-size:6.5px;font-weight:bold;line-height:8.5px;letter-spacing:-0.2px;transform:scaleX(.93);transform-origin:0 50%">Roof</div>
</div>
</div></body></html>
